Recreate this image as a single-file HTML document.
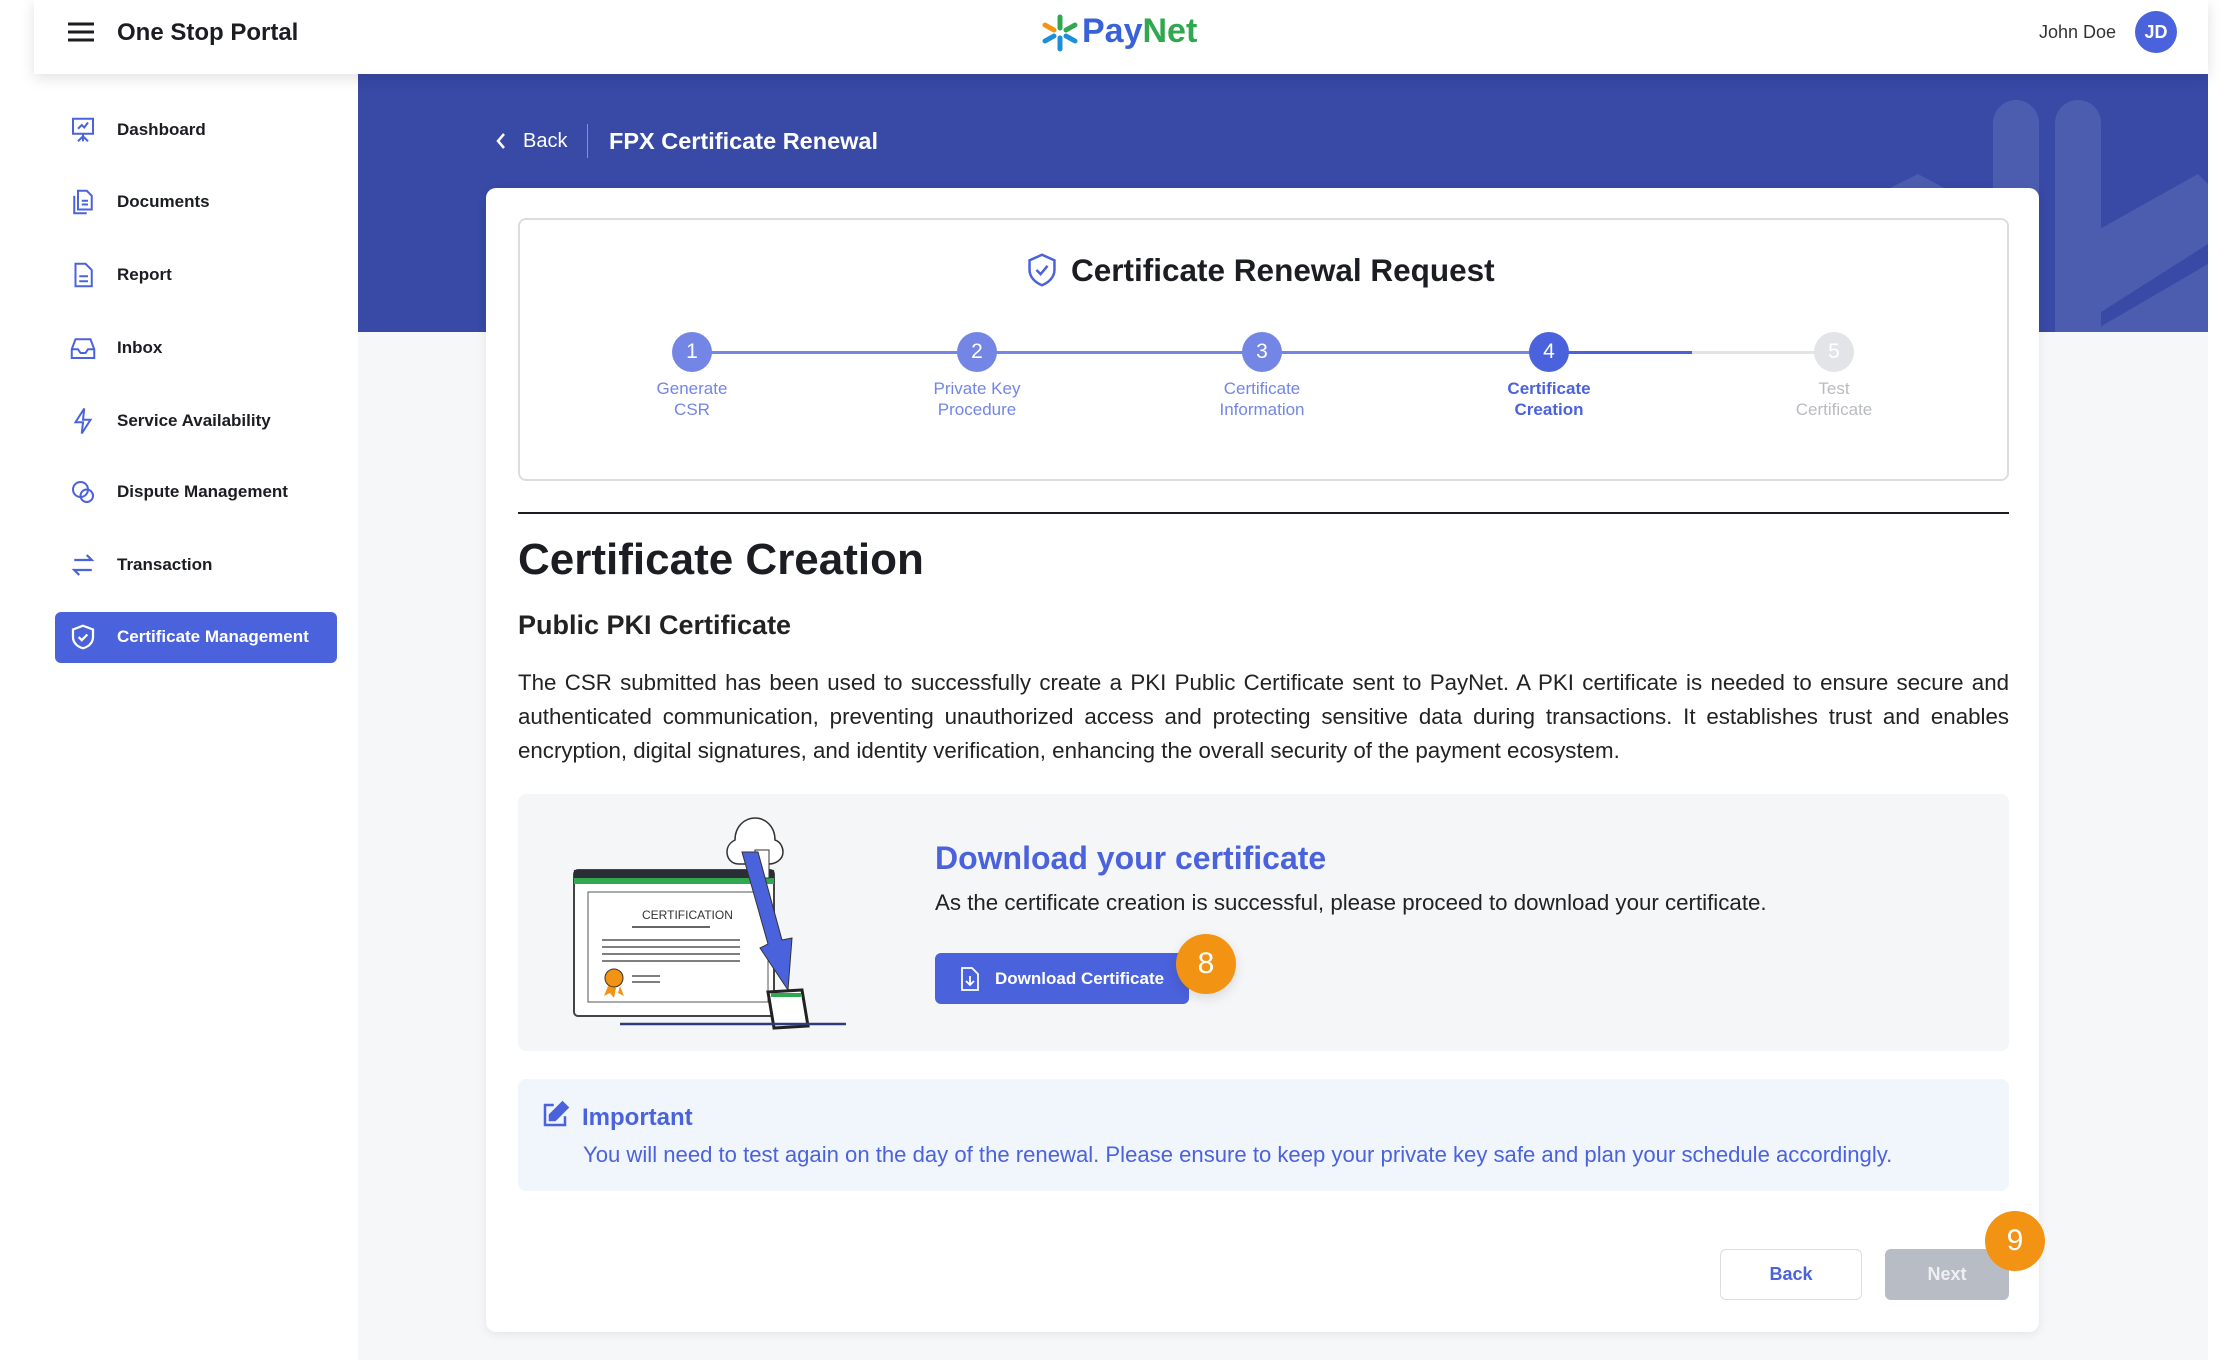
<!DOCTYPE html>
<html><head><meta charset="utf-8"><style>
*{box-sizing:border-box;margin:0;padding:0}
body{width:2236px;height:1360px;position:relative;background:#fff;font-family:"Liberation Sans",sans-serif;overflow:hidden;color:#1b1d22}
.abs{position:absolute}
.hdr{left:34px;top:0;width:2174px;height:74px;background:#fff;box-shadow:0 4px 14px rgba(0,0,0,.12);z-index:5}
.side{left:34px;top:74px;width:324px;height:1286px;background:#fff}
.main{left:358px;top:74px;width:1850px;height:1286px;background:#f6f7f9}
.banner{left:358px;top:74px;width:1850px;height:258px;background:#3849a6;overflow:hidden}
.nav{left:68px;font-size:17px;font-weight:bold;color:#1b1d22;display:flex;align-items:center}
.nav svg{width:30px;height:30px;margin-right:19px}
.card{left:486px;top:188px;width:1553px;height:1144px;background:#fff;border-radius:10px;box-shadow:0 2px 10px rgba(0,0,0,.08)}
.circ{width:40px;height:40px;border-radius:50%;color:#fff;font-size:21px;text-align:center;line-height:40px;transform:translate(-20px,-20px)}
.lbl{width:180px;transform:translateX(-90px);text-align:center;font-size:17px;line-height:21px;color:#7386e6}
</style></head><body>
<div class="abs side"></div>
<div class="abs main"></div>
<div class="abs banner">
<svg width="1850" height="258" style="position:absolute;left:0;top:0">
<g fill="#4c5db0">
<rect x="1635" y="26" width="46" height="300" rx="23"/>
<rect x="1697" y="26" width="46" height="300" rx="23"/>
<polygon points="1697,180 1840,100 1850,110 1850,170 1740,240 1697,215"/>
<polygon points="1730,260 1850,190 1850,258"/>
<polygon points="1520,120 1560,100 1635,140 1635,200"/>
</g></svg>
</div>
<div class="abs hdr">
<svg class="abs" style="left:32px;top:20px" width="30" height="26"><g stroke="#1b1d22" stroke-width="3"><line x1="2" y1="4" x2="28" y2="4"/><line x1="2" y1="12" x2="28" y2="12"/><line x1="2" y1="20" x2="28" y2="20"/></g></svg>
<div class="abs" style="left:83px;top:19px;font-size:24px;font-weight:bold">One Stop Portal</div>
<svg class="abs" style="left:1006px;top:13px" width="40" height="40" viewBox="0 0 40 40"><g stroke-width="5" stroke-linecap="round"><line x1="20" y1="4" x2="20" y2="15" stroke="#2fa84f"/><line x1="20" y1="25" x2="20" y2="36" stroke="#1d8fd6"/><line x1="5" y1="12" x2="14" y2="17" stroke="#f39313"/><line x1="26" y1="23" x2="35" y2="28" stroke="#1d8fd6"/><line x1="5" y1="28" x2="14" y2="23" stroke="#1d8fd6"/><line x1="26" y1="17" x2="35" y2="12" stroke="#2fa84f"/></g></svg>
<div class="abs" style="left:1048px;top:12px;font-size:34px;font-weight:bold"><span style="color:#3a62d8">Pay</span><span style="color:#2fa84f">Net</span></div>
<div class="abs" style="left:2005px;top:22px;font-size:18px;color:#333">John Doe</div>
<div class="abs" style="left:2101px;top:11px;width:42px;height:42px;border-radius:50%;background:#4b62dd;color:#fff;font-size:18px;font-weight:bold;text-align:center;line-height:42px">JD</div>
</div>

<div class="abs nav" style="top:115px"><svg viewBox="0 0 24 24" fill="none" stroke="#4b62dd" stroke-width="1.6"><rect x="4" y="3" width="16" height="12"/><path d="M12 15v6M8 21l4-4 4 4M8 11l3-3 2 2 3-4"/></svg>Dashboard</div>
<div class="abs nav" style="top:187px"><svg viewBox="0 0 24 24" fill="none" stroke="#4b62dd" stroke-width="1.6"><path d="M8 3h7l4 4v11H8z M5 7v14h10"/><path d="M11 11h5M11 14h5"/></svg>Documents</div>
<div class="abs nav" style="top:260px"><svg viewBox="0 0 24 24" fill="none" stroke="#4b62dd" stroke-width="1.6"><path d="M6 3h8l5 5v13H6z"/><path d="M9 13h7M9 17h7"/></svg>Report</div>
<div class="abs nav" style="top:333px"><svg viewBox="0 0 24 24" fill="none" stroke="#4b62dd" stroke-width="1.6"><path d="M3 13l3-8h12l3 8v7H3z M3 13h5l2 3h4l2-3h5"/></svg>Inbox</div>
<div class="abs nav" style="top:406px"><svg viewBox="0 0 24 24" fill="none" stroke="#4b62dd" stroke-width="1.6"><path d="M13 2L6 13h6l-1 9 7-11h-6z"/></svg>Service Availability</div>
<div class="abs nav" style="top:477px"><svg viewBox="0 0 24 24" fill="none" stroke="#4b62dd" stroke-width="1.6"><circle cx="10" cy="10" r="6"/><circle cx="15" cy="15" r="5"/></svg>Dispute Management</div>
<div class="abs nav" style="top:550px"><svg viewBox="0 0 24 24" fill="none" stroke="#4b62dd" stroke-width="1.8"><path d="M5 8h14l-4-4M19 16H5l4 4"/></svg>Transaction</div>
<div class="abs" style="left:55px;top:612px;width:282px;height:51px;background:#4b62dd;border-radius:6px"></div>
<div class="abs nav" style="top:622px;color:#fff"><svg viewBox="0 0 24 24" fill="none" stroke="#fff" stroke-width="1.8"><path d="M12 3l8 3v6c0 5-4 8-8 9-4-1-8-4-8-9V6z"/><path d="M8.5 12l2.5 2.5 4.5-4.5"/></svg>Certificate Management</div>

<svg class="abs" style="left:494px;top:130px" width="14" height="22"><path d="M10 4l-6 7 6 7" stroke="#fff" stroke-width="2.5" fill="none"/></svg>
<div class="abs" style="left:523px;top:130px;font-size:20px;color:#fff">Back</div>
<div class="abs" style="left:587px;top:124px;width:1px;height:34px;background:#8592d0"></div>
<div class="abs" style="left:609px;top:128px;font-size:23.5px;font-weight:bold;color:#fff">FPX Certificate Renewal</div>

<div class="abs card"></div>
<div class="abs" style="left:518px;top:218px;width:1491px;height:263px;border:2px solid #dcdde0;border-radius:8px;background:#fff"></div>
<svg class="abs" style="left:1025px;top:252px" width="34" height="36" viewBox="0 0 24 26" fill="none" stroke="#4b62dd" stroke-width="1.8"><path d="M12 2l9 4v7c0 5-4 9-9 11-5-2-9-6-9-11V6z"/><path d="M8 13l3 3 5-6"/></svg>
<div class="abs" style="left:1071px;top:252px;font-size:31.5px;font-weight:bold">Certificate Renewal Request</div>
<div class="abs" style="left:692px;top:351px;width:857px;height:3px;background:#7386e6"></div>
<div class="abs" style="left:1549px;top:351px;width:143px;height:3px;background:#4b62dd"></div>
<div class="abs" style="left:1692px;top:351px;width:142px;height:3px;background:#e3e4e8"></div>
<div class="abs circ" style="left:692px;top:352px;background:#7386e6">1</div>
<div class="abs circ" style="left:977px;top:352px;background:#7386e6">2</div>
<div class="abs circ" style="left:1262px;top:352px;background:#7386e6">3</div>
<div class="abs circ" style="left:1549px;top:352px;background:#4b62dd">4</div>
<div class="abs circ" style="left:1834px;top:352px;background:#e3e4e8">5</div>
<div class="abs lbl" style="left:692px;top:378px">Generate<br>CSR</div>
<div class="abs lbl" style="left:977px;top:378px">Private Key<br>Procedure</div>
<div class="abs lbl" style="left:1262px;top:378px">Certificate<br>Information</div>
<div class="abs lbl" style="left:1549px;top:378px;color:#4b62dd;font-weight:bold">Certificate<br>Creation</div>
<div class="abs lbl" style="left:1834px;top:378px;color:#b9bbc0">Test<br>Certificate</div>

<div class="abs" style="left:518px;top:512px;width:1491px;height:2px;background:#1b1d22"></div>
<div class="abs" style="left:518px;top:535px;font-size:44px;font-weight:bold">Certificate Creation</div>
<div class="abs" style="left:518px;top:610px;font-size:27px;font-weight:bold;color:#222">Public PKI Certificate</div>
<div class="abs" style="left:518px;top:666px;width:1491px;font-size:22.3px;line-height:34px;text-align:justify;color:#222">The CSR submitted has been used to successfully create a PKI Public Certificate sent to PayNet. A PKI certificate is needed to ensure secure and authenticated communication, preventing unauthorized access and protecting sensitive data during transactions. It establishes trust and enables encryption, digital signatures, and identity verification, enhancing the overall security of the payment ecosystem.</div>

<div class="abs" style="left:518px;top:794px;width:1491px;height:257px;background:#f5f6f8;border-radius:8px"></div>
<svg class="abs" style="left:570px;top:812px" width="280" height="218" viewBox="0 0 280 218">
<rect x="4" y="58" width="200" height="146" rx="4" fill="#fff" stroke="#444" stroke-width="2"/>
<rect x="4" y="58" width="200" height="12" fill="#2a2d33"/>
<rect x="4" y="66" width="200" height="6" fill="#2fa84f"/>
<rect x="18" y="80" width="180" height="110" fill="#fff" stroke="#555"/>
<text x="72" y="107" font-size="12" font-family="Liberation Sans" fill="#333">CERTIFICATION</text>
<line x1="62" y1="115" x2="140" y2="115" stroke="#333" stroke-width="1.5"/>
<g stroke="#555" stroke-width="1.5"><line x1="32" y1="128" x2="170" y2="128"/><line x1="32" y1="135" x2="170" y2="135"/><line x1="32" y1="142" x2="170" y2="142"/><line x1="32" y1="149" x2="170" y2="149"/><line x1="62" y1="164" x2="90" y2="164"/><line x1="62" y1="170" x2="90" y2="170"/></g>
<circle cx="44" cy="166" r="9" fill="#f39313" stroke="#333"/>
<path d="M38 174l-4 10 6-3 4 5 2-10M50 174l4 10-6-3" fill="#f39313"/>
<path d="M165 28c0-14 10-22 20-22s20 8 20 22c6 2 8 8 8 12 0 8-8 12-14 12h-30c-8 0-12-6-12-12s4-10 8-12z" fill="#fff" stroke="#333" stroke-width="1.5"/>
<rect x="185" y="38" width="14" height="28" fill="#fff" stroke="#333"/>
<polygon points="172,40 188,40 212,128 222,126 218,178 190,136 198,132" fill="#4b62dd" stroke="#333"/>
<polygon points="198,180 232,178 238,214 204,216" fill="#fff" stroke="#222" stroke-width="3"/>
<rect x="201" y="181" width="30" height="4" fill="#2fa84f"/>
<line x1="50" y1="212" x2="276" y2="212" stroke="#2f3b7a" stroke-width="2.5"/>
</svg>
<div class="abs" style="left:935px;top:840px;font-size:32px;font-weight:bold;color:#4b62dd">Download your certificate</div>
<div class="abs" style="left:935px;top:890px;font-size:22.3px;color:#222">As the certificate creation is successful, please proceed to download your certificate.</div>
<div class="abs" style="left:935px;top:953px;width:254px;height:51px;background:#4b62dd;border-radius:6px;color:#fff;font-size:17px;font-weight:bold;display:flex;align-items:center;padding-left:24px"><svg width="22" height="26" viewBox="0 0 22 26" fill="none" stroke="#fff" stroke-width="1.8" style="margin-right:14px"><path d="M3 2h10l6 6v16H3z"/><path d="M11 10v9M7 15l4 4 4-4"/></svg>Download Certificate</div>
<div class="abs" style="left:1176px;top:934px;width:60px;height:60px;border-radius:50%;background:#f39313;color:#fff;font-size:30px;text-align:center;line-height:60px;box-shadow:0 4px 12px rgba(0,0,0,.12)">8</div>

<div class="abs" style="left:518px;top:1079px;width:1491px;height:112px;background:#f1f5fc;border-radius:8px"></div>
<svg class="abs" style="left:540px;top:1100px" width="30" height="30" viewBox="0 0 24 24" fill="none" stroke="#4b62dd" stroke-width="2"><path d="M11 4H4v16h16v-7"/><path d="M18 2l4 4-10 10H8v-4z" fill="#4b62dd"/></svg>
<div class="abs" style="left:582px;top:1104px;font-size:24px;font-weight:bold;color:#4b62dd">Important</div>
<div class="abs" style="left:583px;top:1142px;font-size:22.1px;color:#4b62dd">You will need to test again on the day of the renewal. Please ensure to keep your private key safe and plan your schedule accordingly.</div>

<div class="abs" style="left:1720px;top:1249px;width:142px;height:51px;border:1px solid #dcdde0;border-radius:6px;background:#fff;color:#4b62dd;font-size:18px;font-weight:bold;text-align:center;line-height:49px">Back</div>
<div class="abs" style="left:1885px;top:1249px;width:124px;height:51px;border-radius:6px;background:#b8bcc4;color:#eef0f3;font-size:18px;font-weight:bold;text-align:center;line-height:51px">Next</div>
<div class="abs" style="left:1985px;top:1211px;width:60px;height:60px;border-radius:50%;background:#f39313;color:#fff;font-size:30px;text-align:center;line-height:60px">9</div>
</body></html>
